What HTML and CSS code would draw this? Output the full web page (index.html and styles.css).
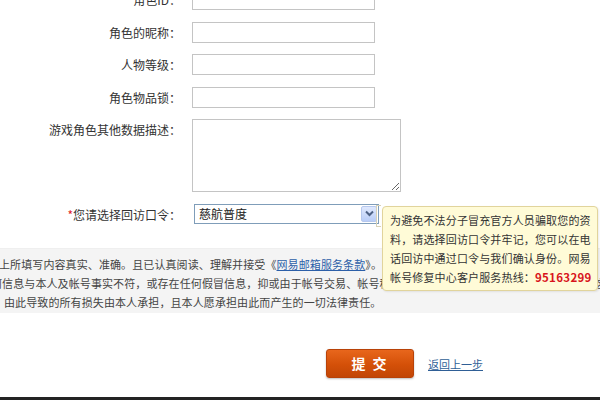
FILE: index.html
```html
<!DOCTYPE html>
<html lang="zh-CN">
<head>
    <meta charset="UTF-8">
    <meta name="viewport" content="width=device-width, initial-scale=1.0">
    <title>帐号修复申请</title>
    <link rel="stylesheet" href="styles.css">
</head>
<body>
    <div class="form">
        <div class="row">
            <label class="label">角色ID：</label>
            <input class="text" type="text">
        </div>
        <div class="row">
            <label class="label">角色的昵称：</label>
            <input class="text" type="text">
        </div>
        <div class="row">
            <label class="label">人物等级：</label>
            <input class="text" type="text">
        </div>
        <div class="row">
            <label class="label">角色物品锁：</label>
            <input class="text" type="text">
        </div>
        <div class="row row-top">
            <label class="label">游戏角色其他数据描述：</label>
            <textarea class="area"></textarea>
        </div>
        <div class="row row-select">
            <label class="label"><em>*</em>您请选择回访口令：</label>
            <div class="select">
                <span class="select-value">慈航普度</span>
                <span class="select-btn">
                    <svg width="9" height="7" viewBox="0 0 9 7"><path d="M1 1.5 L4.5 5 L8 1.5" fill="none" stroke="#4d6185" stroke-width="2"/></svg>
                </span>
            </div>
            <div class="tip">
                <span class="tip-line">为避免不法分子冒充官方人员骗取您的资</span>
                <span class="tip-line">料，请选择回访口令并牢记，您可以在电</span>
                <span class="tip-line">话回访中通过口令与我们确认身份。网易</span>
                <span class="tip-line">帐号修复中心客户服务热线：<b>95163299</b></span>
            </div>
        </div>
    </div>

    <div class="agree">
        <p class="agree-line l1">上所填写内容真实、准确。且已认真阅读、理解并接受《<a href="#">网易邮箱服务条款</a>》。</p>
        <p class="agree-line l2"><span>何信息与本人及帐号事实不符，或存在任何假冒信息，抑或由于帐号交易、帐号租</span><span class="tail">这</span></p>
        <p class="agree-line l3">由此导致的所有损失由本人承担，且本人愿承担由此而产生的一切法律责任。</p>
    </div>

    <div class="actions">
        <button class="submit" type="button">提 交</button>
        <a class="back" href="#">返回上一步</a>
    </div>

    <div class="bottom-bar"></div>
</body>
</html>
```

FILE: styles.css
```css
html, body {
    margin: 0;
    padding: 0;
    background: #fff;
    font-family: "Noto Sans CJK SC", "Liberation Sans", sans-serif;
    font-size: 12px;
    color: #333;
    overflow: hidden;
}

.form {
    margin-top: -11px;
    display: flex;
    flex-direction: column;
    gap: 11.5px;
}

.row {
    display: flex;
    align-items: center;
    gap: 11px;
    position: relative;
}

.row-top {
    align-items: flex-start;
}

.row-top .label {
    padding-top: 1px;
}

.label {
    width: 181px;
    text-align: right;
    line-height: 19px;
    color: #333;
}

.label em {
    color: #e0202a;
    font-style: normal;
}

.text {
    box-sizing: border-box;
    width: 183px;
    height: 21px;
    margin: 0;
    border: 1px solid #c4c4c4;
    padding: 0 4px;
    background: #fff;
}

.area {
    box-sizing: border-box;
    width: 209px;
    height: 73px;
    margin: 0;
    border: 1px solid #c4c4c4;
    padding: 2px 4px;
    resize: both;
}

.row-select .label {
    padding-top: 1px;
}

.select {
    box-sizing: border-box;
    width: 185px;
    height: 20px;
    margin-left: 2px;
    border: 1px solid #7f9db9;
    display: flex;
    align-items: center;
    justify-content: space-between;
    padding: 0 1px 0 4px;
    background: #fff;
}

.select-value {
    color: #222;
    line-height: 18px;
}

.select-btn {
    box-sizing: border-box;
    width: 16px;
    height: 16px;
    border: 1px solid #b6c8ee;
    border-radius: 2px;
    background: linear-gradient(#dfe8fd, #b9cdf7);
    display: flex;
    align-items: center;
    justify-content: center;
}

.tip {
    position: absolute;
    left: 382px;
    top: 2px;
    z-index: 2;
    box-sizing: border-box;
    width: 216px;
    height: 85px;
    padding: 4px 0 0 7px;
    background: #fffbd7;
    border: 1px solid #e1d49c;
    border-radius: 4px;
    box-shadow: 1px 1px 2px rgba(0, 0, 0, 0.08);
    font-size: 11px;
    letter-spacing: 0.15px;
    line-height: 19px;
    color: #333;
}

.tip-line {
    display: block;
    white-space: nowrap;
}

.tip::before {
    content: "";
    position: absolute;
    left: -7px;
    top: -2px;
    width: 4px;
    height: 20px;
    border: 1px solid #d8d2b8;
    border-right: none;
}

.tip b {
    color: #d8141c;
    font-size: 11.5px;
    letter-spacing: 0.3px;
}

.agree {
    margin-top: 24px;
    height: 65px;
    box-sizing: border-box;
    padding-top: 6px;
    background: #f4f4f4;
    border-top: 1px solid #efefef;
    overflow: hidden;
}

.agree-line {
    margin: 0;
    white-space: nowrap;
    font-size: 11px;
    letter-spacing: 0.1px;
    line-height: 19px;
    color: #444;
}

.agree-line a {
    color: #2c5fa8;
    text-decoration: underline;
}

.l1 {
    text-indent: -1px;
}

.l2 {
    display: flex;
    margin-left: -9px;
    margin-right: -5px;
}

.l2 .tail {
    margin-left: auto;
}

.l3 {
    text-indent: 4px;
}

.actions {
    margin-top: 36px;
    padding-left: 326px;
    display: flex;
    align-items: center;
    gap: 14px;
}

.submit {
    width: 88px;
    height: 29px;
    margin: 0;
    border: 1px solid #b84208;
    border-radius: 3px;
    background: linear-gradient(#e8661c, #d45008 55%, #c24606);
    box-shadow: 0 1px 2px rgba(0, 0, 0, 0.25);
    color: #fff;
    font-family: inherit;
    font-size: 14px;
    font-weight: bold;
    letter-spacing: 2px;
    cursor: pointer;
}

.back {
    color: #2f5f96;
    text-decoration: underline;
    font-size: 11px;
    padding-top: 2px;
}

.bottom-bar {
    margin-top: 19px;
    height: 10px;
    background: #232323;
}
```
